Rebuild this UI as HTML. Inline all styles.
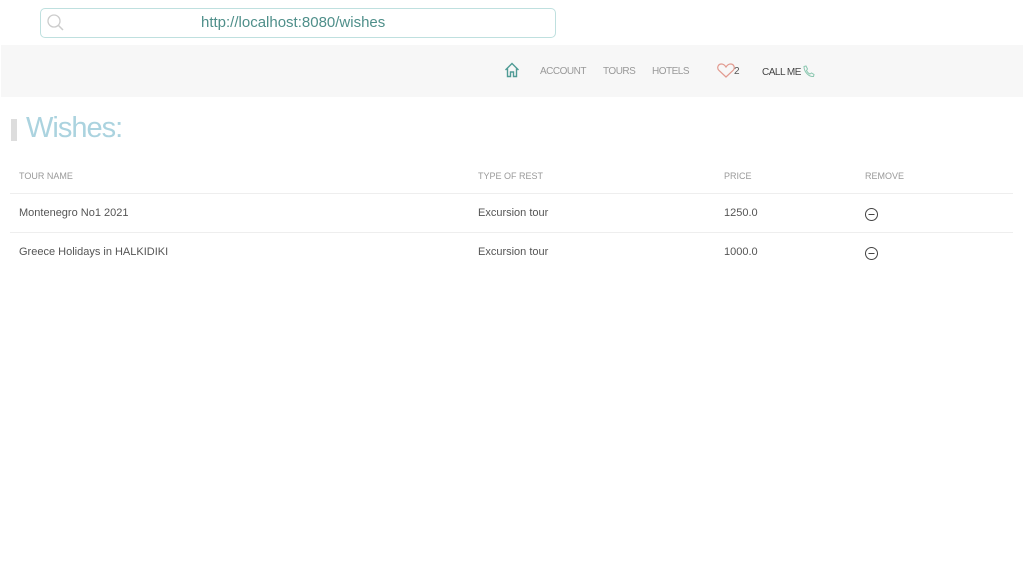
<!DOCTYPE html>
<html><head><meta charset="utf-8"><style>
*{margin:0;padding:0;box-sizing:border-box}
body{width:1024px;height:574px;background:#fff;font-family:"Liberation Sans",sans-serif;position:relative;overflow:hidden}
.url{position:absolute;left:40px;top:8px;width:516px;height:30px;border:1.5px solid #bfe0df;border-radius:5px}
.url span{position:absolute;left:160px;top:5px;font-size:15px;color:#4f8f8a}
.nav{position:absolute;left:1px;top:45px;width:1022px;height:52px;background:#f7f7f7}
.n{position:absolute;top:21px;font-size:10px;color:#999;letter-spacing:-0.5px}
.t{position:absolute;font-size:11px;color:#555}
.h{position:absolute;font-size:9px;color:#999}
.line{position:absolute;left:10px;width:1003px;height:1px;background:#eee}
</style></head><body>
<div class="url"><svg style="position:absolute;left:5px;top:4px" width="20" height="20" viewBox="0 0 20 20"><circle cx="8" cy="8" r="6" fill="none" stroke="#ccc" stroke-width="1.3"/><path d="M12.5 12.5L17 17" stroke="#ccc" stroke-width="1.5"/></svg><span>http://localhost:8080/wishes</span></div>
<div class="nav">
<svg style="position:absolute;left:503px;top:17px" width="16" height="16" viewBox="0 0 16 16"><path d="M1.5 8L8 1.5 14.5 8M3.5 6.5V14.5H6.5V10H9.5V14.5H12.5V6.5" fill="none" stroke="#4f9b95" stroke-width="1.4"/></svg>
<span class="n" style="left:539px">ACCOUNT</span>
<span class="n" style="left:602px">TOURS</span>
<span class="n" style="left:651px">HOTELS</span>
<svg style="position:absolute;left:716px;top:18px" width="18" height="15" viewBox="0 0 18 15"><path d="M9 14L2 7.5C-0.5 5 1 1 4.5 1 6.5 1 8 2.5 9 4 10 2.5 11.5 1 13.5 1 17 1 18.5 5 16 7.5Z" fill="none" stroke="#e29a8f" stroke-width="1.2"/></svg>
<span class="n" style="left:733px;color:#555">2</span>
<span class="n" style="left:761px;top:22px;color:#444">CALL ME</span>
<svg style="position:absolute;left:801px;top:20px" width="13" height="13" viewBox="0 0 13 13"><path d="M2 1.5L4 1 5.5 4 4.5 5.5C5.5 7.5 6.5 8.5 8 9L9.5 8 12 9.5 11.5 11.5C7 12 2 7 2 1.5Z" fill="none" stroke="#8bc7b0" stroke-width="1"/></svg>
</div>
<div style="position:absolute;left:11px;top:119px;width:6px;height:22px;background:#ddd"></div>
<div style="position:absolute;left:26px;top:112px;font-size:29px;color:#abd3df;letter-spacing:-1px">Wishes:</div>
<span class="h" style="left:19px;top:171px">TOUR NAME</span>
<span class="h" style="left:478px;top:171px">TYPE OF REST</span>
<span class="h" style="left:724px;top:171px">PRICE</span>
<span class="h" style="left:865px;top:171px">REMOVE</span>
<div class="line" style="top:193px"></div>
<span class="t" style="left:19px;top:207px">Montenegro No1 2021</span>
<span class="t" style="left:478px;top:207px">Excursion tour</span>
<span class="t" style="left:724px;top:207px">1250.0</span>
<svg style="position:absolute;left:864px;top:207px" width="15" height="15"><circle cx="7.5" cy="7.5" r="6" fill="none" stroke="#444" stroke-width="1"/><path d="M4.5 7.5H10.5" stroke="#444"/></svg>
<div class="line" style="top:232px"></div>
<span class="t" style="left:19px;top:246px">Greece Holidays in HALKIDIKI</span>
<span class="t" style="left:478px;top:246px">Excursion tour</span>
<span class="t" style="left:724px;top:246px">1000.0</span>
<svg style="position:absolute;left:864px;top:246px" width="15" height="15"><circle cx="7.5" cy="7.5" r="6" fill="none" stroke="#444" stroke-width="1"/><path d="M4.5 7.5H10.5" stroke="#444"/></svg>
</body></html>
